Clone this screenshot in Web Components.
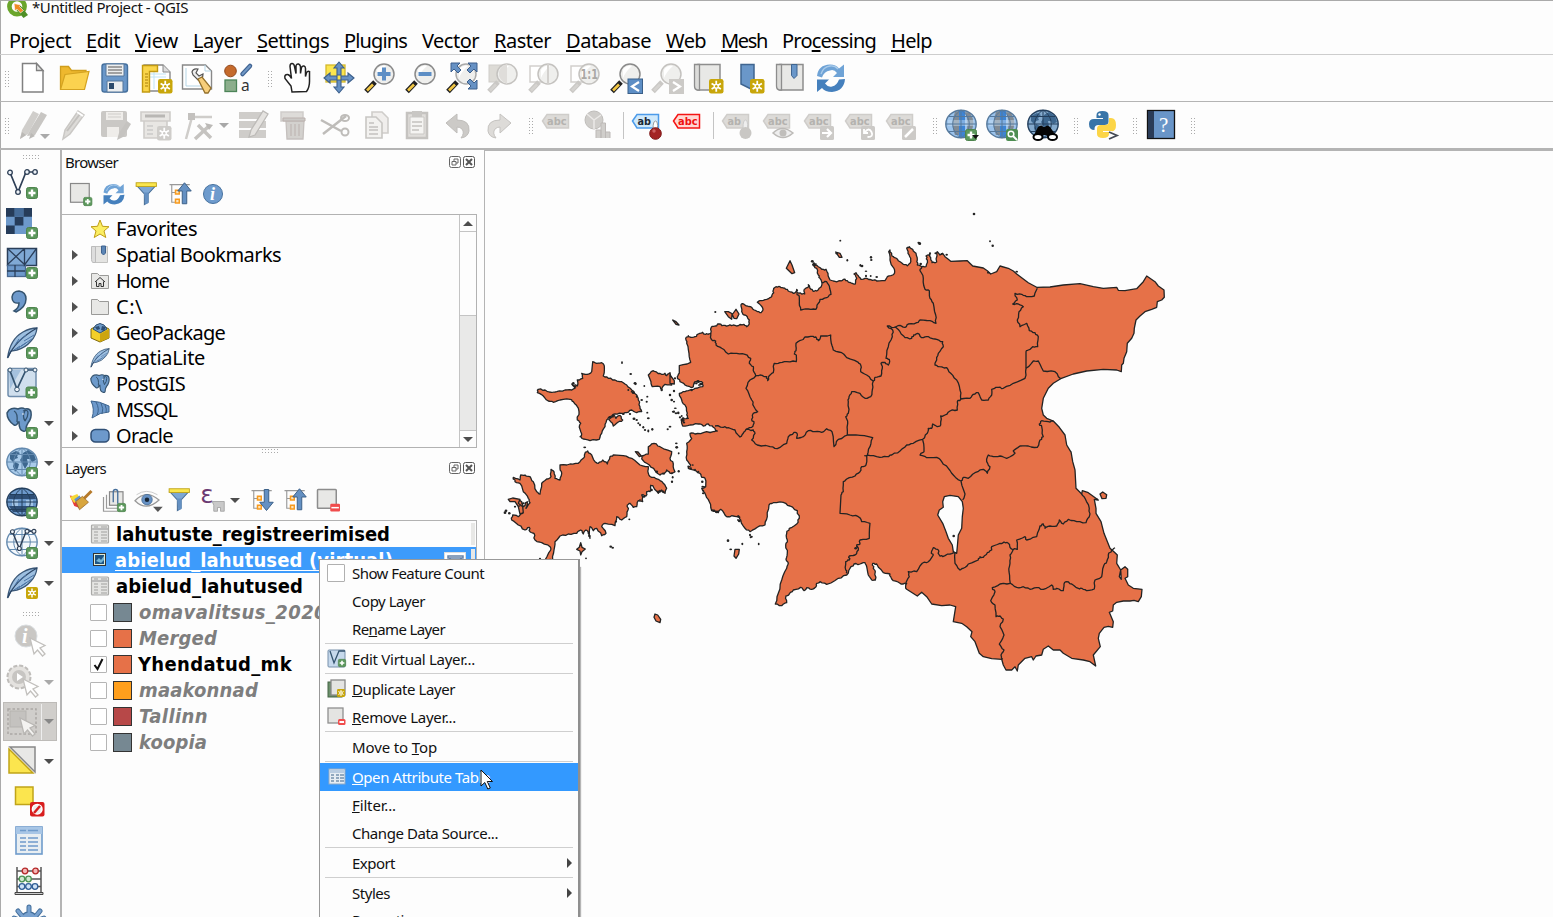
<!DOCTYPE html>
<html lang="en">
<head>
<meta charset="utf-8">
<title>Untitled Project - QGIS</title>
<style>html,body{margin:0;height:100%;overflow:hidden;background:#fdfdfd}</style>
</head>
<body>
<qgis-window></qgis-window>
<script>
/* ---------- icon artwork ---------- */
const plus=(x,y,s=12)=>`<g transform="translate(${x} ${y}) scale(${s/12})"><rect x=".5" y=".5" width="11" height="11" rx="2" fill="#5c985c" stroke="#4d844d"/><path d="M6 2.5v7M2.500 6h7" stroke="#fff" stroke-width="2.4"/></g>`;
const minus=(x,y,s=9)=>`<rect x="${x}" y="${y}" width="${s}" height="${s*.8}" rx="1.5" fill="#f04c4c"/><path d="M${x+1.5} ${y+s*.4}h${s-3}" stroke="#fff" stroke-width="2"/>`;
const fresh=(x,y,s=14,c='#c8a60a')=>`<g transform="translate(${x} ${y}) scale(${s/14})"><rect width="14" height="14" rx="2.2" fill="${c}"/><circle cx="7" cy="7" r="2.5" fill="#fff"/><path d="M7 1.8v10.4M2.5 4.4l9 5.2M11.5 4.4l-9 5.2" stroke="#fff" stroke-width="1.7"/><circle cx="7" cy="7" r="1.2" fill="${c}"/></g>`;
const lens=(hc='#f2c744',oc='#8a8a8a',extra='',dark='#222')=>`<path d="M11 20L2 29.500" stroke="${dark}" stroke-width="5"/><path d="M9 22.500L3 28.500" stroke="${hc}" stroke-width="2.600"/><circle cx="20" cy="12" r="10" fill="#efefed" stroke="${oc}" stroke-width="1.500"/><path d="M13 8q3-5 9-4q-6 5-9 12z" fill="#fff"/>${extra}`;
const glens=(back,extra='')=>back+lens('#d5d3d0','#c4c2bf',extra,'#cac8c5');
const label=(f,s,t,x='',word='abc')=>`<path d="M2.500 12L7 5.500h21.500V19H7z" fill="${f}" stroke="${s}" stroke-width="1.500"/><text x="${word==='ab'?7.500:7}" y="16.300" font-family="DejaVu Sans" font-weight="bold" font-size="10.500" textLength="${word==='ab'?13.500:19.500}" lengthAdjust="spacingAndGlyphs" fill="${t}">${word}</text>${x}`;
const glabel=(x,w)=>label('#dddbd8','#cfcdca','#b4b2af',x,w);
const globe=(a,b,l,x='')=>`<ellipse cx="16" cy="15" rx="15.200" ry="13.800" fill="${a}" stroke="${l}" stroke-width="1.400"/>${b}<path d="M1 15h30M4 7.500h24M4 22.500h24M16 1v28M16 1C5 8 5 22 16 29M16 1c11 7 11 21 0 28" fill="none" stroke="${l}" stroke-width="1"/>${x}`;
const land='<path d="M4 7l6-3 4 2-3 3 1 2-3 1-2 3-3-3zM9 15l4 2-1 4-3 4-2-6zM17 6l5-3 6 4 2 6-4 2-2-3-3 0 1 5-3 5-3-6-2-3 2-3z" fill="#3d678f"/>';
const feather='<path d="M1.500 31C3 20 8 10 17 5q7-4 14-4q-1 8-6 13-6 7-14 9l-6 1z" fill="#9dbfe0" stroke="#3b5878" stroke-width="1.300"/><path d="M2 30.500C7 18 17 9 31 1" fill="none" stroke="#2c4666" stroke-width="1.300"/><path d="M8 23l6-4M11 22l9-6M15 19l11-7M12 15l8-7M18 14l10-6M9 18l4-6" stroke="#4a74a5" stroke-width="1"/>';
const vee=(c='#2e3f56',f='#eef3f8')=>`<path d="M4 5.500L12 25 20 5h9" fill="none" stroke="${c}" stroke-width="1.700"/><g fill="${f}" stroke="${c}" stroke-width="1.300"><circle cx="4" cy="5.500" r="2.300"/><circle cx="12" cy="25" r="2.300"/><circle cx="21" cy="5" r="2.300"/><circle cx="29" cy="5" r="2.300"/></g>`;
const elephant='<path d="M3 3Q7 0 12 2q4-2 7 0 5-1 6 3 1 6-3 11-2 3-2 6 0 3-3 2-4-1-4-9l-1 0q-1 4-4 3Q1 13 1 6z" fill="#6d9acb" stroke="#34536f" stroke-width="1.500"/><path d="M8 4q4 2 3 11M19 4q-3 5 0 10M17 4q5-2 5 2t-3 8" fill="none" stroke="#34536f" stroke-width="1.300"/><circle cx="17" cy="7" r=".8" fill="#fff"/>';
const sync='<path d="M2 14Q3 3 15 2.500q6 0 9 4l5-4V15H18l4-4Q19 7 15 8.500q-6 1-8 7z" fill="#6fa3d6"/><path d="M30 17Q29 29 17 30q-7 0-10-4l-5 4V17.500h12l-4 4q3 4 7 3 5-1 7-7z" fill="#4580bd"/><path d="M6 12Q8 5 15 4q5-.5 8 3" fill="none" stroke="#a9cbea" stroke-width="1.300"/>';
const funnel='<path d="M2.500 5h25l-10 11v11l-5 3V16z" fill="#7da7d4" stroke="#4b7097" stroke-width="1.400"/><path d="M12 14h6v14l-4 2z" fill="#6490c2"/><rect x="1.500" y="1" width="27" height="5" fill="#fae64d" stroke="#c0a419" stroke-width="1.200"/>';
const cur=(x,y,f='#fff',s='#c2c0bd')=>`<path d="M${x} ${y}l4 16 3.500-4 5 6 2.500-2-5-6 5-2.500z" fill="${f}" stroke="${s}" stroke-width="1.300"/>`;
const tree='<path d="M2 3.500h27M5 3v24h6M5 14h5" fill="none" stroke="#999" stroke-width="1.500"/><rect x="9" y="10" width="7" height="7" fill="#f79a1e"/><rect x="9" y="22" width="7" height="7" fill="#f79a1e"/><rect x="11" y="12" width="3" height="3" fill="#fbe5c0"/><rect x="11" y="24" width="3" height="3" fill="#fbe5c0"/>';
const sq='<rect x="2" y="2" width="25" height="25" rx="1" fill="#e8e8e6" stroke="#8d8d8d" stroke-width="2"/>';
const table=(a,b,h)=>`<rect x="3" y="2" width="26" height="27" fill="${a}" stroke="${b}" stroke-width="1.600"/><rect x="3" y="2" width="26" height="7" fill="${h}"/><path d="M7 5.500h6M15 5.500h10M7 13h6M15 13h10M7 17h6M15 17h10M7 21h6M15 21h10M7 25h6M15 25h10" stroke="${b}" stroke-width="1.600"/>`;
const G='#cfcdca';
const I={
logo:'<circle cx="12" cy="5.500" r="7.600" fill="none" stroke="#6aa52b" stroke-width="4.600"/><path d="M11 4l4 0 8 10-4.500 3-8-9z" fill="#4f8f26"/><path d="M9 2.500l7 1.500-1.500 1.500 4 4-3 2.500-3.500-4-2 2z" fill="#f08a24" stroke="#fff" stroke-width=".6"/>',
newp:'<path d="M5.500 1.500h14l6.500 7v21.500H5.500z" fill="#fff" stroke="#808080" stroke-width="1.500"/><path d="M19.500 1.500v7h6.500z" fill="#e5e5e3" stroke="#808080" stroke-width="1.300"/>',
open:'<path d="M2.500 27V4.500h8l3 4H28V13" fill="#eeb82e" stroke="#d09e1c" stroke-width="1.300"/><path d="M2.500 27.500L7 12.500l24-3-4.500 18z" fill="#fbd24f" stroke="#d4a321" stroke-width="1.200"/>',
save:'<rect x="3" y="2" width="25.500" height="28" rx="2.500" fill="#6a97c9" stroke="#45709d" stroke-width="1.400"/><path d="M7 2h18v12H7zM8 19h16v11H8z" fill="#eceeef" stroke="#54779b"/><path d="M9 5h14M9 8h14M9 11h14" stroke="#888" stroke-width="1.300"/><rect x="10" y="21" width="5" height="6" fill="#2c4a6b"/>',
layout:'<path d="M4 3h19l7 7v19H4z" fill="#fff" stroke="#888" stroke-width="1.400"/><path d="M23 3v7h7" fill="#ddd" stroke="#888"/><path d="M10 12h16M10 15h16M14 9v18" stroke="#bfe4f5"/><path d="M2.500 3.500h15v6h-8V30h-7z" fill="#fad54a" stroke="#c29a12" stroke-width="1.400"/><path d="M5 12h3M5 15h3M5 18h3M5 21h3M5 24h3" stroke="#a97f0a"/>'+fresh(18,17,14.5),
manager:'<path d="M1.500 3h23l6 6v18h-29z" fill="#fff" stroke="#888" stroke-width="1.400"/><path d="M24 3v6h6M5 6v18h20" fill="none" stroke="#b5d5e5"/><path d="M11 10q1-4 6-3l-2 4 3 3 4-2q0 6-5 6L12 13z" fill="#eee" stroke="#555" stroke-width="1.200"/><path d="M17 17l4-2 9 11-3 5-3 0z" fill="#f7ce7b" stroke="#94712d" stroke-width="1.300"/>',
style:'<circle cx="8.500" cy="9" r="5.800" fill="#c56a2c" stroke="#91461a"/><path d="M20.500 12l7.500-8" stroke="#3f6392" stroke-width="4.500" stroke-linecap="round"/><path d="M20.500 12l7.500-8" stroke="#7198c5" stroke-width="2" stroke-linecap="round"/><rect x="3" y="18" width="11.500" height="11.500" fill="#8cae8c" stroke="#4c8458" stroke-width="1.300"/><text x="19" y="29" font-family="Noto Sans" font-size="15.500" fill="#333">a</text>',
pan:'<path d="M10 30l-1-6-6-7.500q-1-4 2.500-4 2 0 4 4l-1.500-12q0-3 2-3t2.500 3l1.500 7 0-8q1-2 2.500-1.500t2 2.500l0 7 1-6q1-2 2.500-1.500t1.500 2.500l0 8 1-4q1.500-2 3-1l0 10q0 6-3 10z" fill="#fff" stroke="#222" stroke-width="1.500"/>',
pansel:'<rect x="3" y="3" width="19" height="17" fill="#fbe54e" stroke="#d5b92c" stroke-width="1.300"/><path d="M16 0l5 6h-3v7h-4V6h-3zM16 31l-5-6h3v-7h4v7h3zM1 16l6-5v3h7v4H7v3zM31 16l-6-5v3h-7v4h7v3z" fill="#6691c4" stroke="#3c5f8c" stroke-width="1.100"/>',
zin:lens('#f2c744','#8a8a8a','<path d="M20 5.500v13M13.500 12h13" stroke="#5d8ec5" stroke-width="4"/>'),
zout:lens('#f2c744','#8a8a8a','<path d="M13.500 12h13" stroke="#5d8ec5" stroke-width="4"/>'),
zfull:lens('#f2c744','#aaa','<path d="M5 1h9l-3 3 4 4-3 3-4-4-3 3zM31 1v9l-3-3-4 4-3-3 4-4-3-3zM31 27h-9l3-3-4-4 3-3 4 4 3-3z" fill="#6691c4" stroke="#3c5f8c"/>'),
zsel:glens('<rect x="2" y="3" width="18" height="17" fill="#dddbd6" stroke="#cfcdc9"/>','<path d="M20 2v20q-9-4-8-12 1-6 8-8z" fill="#dfddda"/>'),
zlay:glens('<path d="M2 4h18v16H2z" fill="#fff" stroke="#d2d0cd" stroke-width="1.500"/>','<path d="M20 2v20" stroke="#d2d0cd" stroke-width="2"/>'),
znat:glens('<path d="M2 4h18v16H2z" fill="#fff" stroke="#d2d0cd" stroke-width="1.500"/>','<text x="11.500" y="17" font-family="DejaVu Sans" font-weight="bold" font-size="13.500" textLength="17.500" lengthAdjust="spacingAndGlyphs" fill="#aaa8a5">1:1</text>'),
zlast:lens('#f2c744','#8a8a8a','<rect x="18" y="17" width="14.500" height="14.500" fill="#5d8ec5" stroke="#3b6089"/><path d="M29 20l-7 4.500 7 4.500" fill="none" stroke="#fff" stroke-width="2.200"/>'),
znext:glens('','<rect x="18" y="17" width="15" height="15" fill="#cccac7"/><path d="M22 20l7 4.500-7 4.500" fill="none" stroke="#fff" stroke-width="2.200"/>'),
newmap:'<path d="M6 2.500h22V28H6z" fill="#e8e8e6" stroke="#8d8d8d" stroke-width="1.500"/><path d="M2.500 2.500h5V28H5q-2.500-.5-2.500-4z" fill="#dcdcda" stroke="#8d8d8d" stroke-width="1.300"/>'+fresh(17,17,14.5),
newbm:'<path d="M8 2.500h13v26L8 22z" fill="#6a97c9" stroke="#3f6590" stroke-width="1.500"/>'+fresh(17,17,14.5),
bms:'<path d="M6 2.500h23V28H6z" fill="#e8e8e6" stroke="#8d8d8d" stroke-width="1.500"/><path d="M2.500 2.500h5V28H5q-2.500-.5-2.500-4z" fill="#dcdcda" stroke="#8d8d8d" stroke-width="1.300"/><path d="M17.500 2.500h5.500v11l-3 3-2.500-3z" fill="#6a97c9" stroke="#3f6590"/>',
sync,
edits:'<path d="M3 30l2-9L16 2l6 3L11 25z" fill="#d0cecb"/><path d="M10 27l3-6L24 3l6 3-12 20z" fill="#c8c6c3"/><path d="M3 30l2-7 4 3zM12 30l2-6 4 3z" fill="#bbb9b6"/>',
edit:'<path d="M5 30l2-9L20 2l6 4L12 25z" fill="#dddbd8" stroke="#cac8c5" stroke-width="1.500"/><path d="M9 22L22 5" stroke="#c3c1be" stroke-width="2"/><path d="M19 3l6 4" stroke="#fff" stroke-width="2"/>',
gsave:`<rect x="2" y="2" width="26" height="26" rx="2" fill="#cac8c5"/><path d="M7 3h17v8H7zM8 18h12v10H8z" fill="#efedea"/><path d="M9 5h13M9 8h13" stroke="${G}"/><path d="M18 31l2-7 8-12 4 3-8 13z" fill="#c5c3c0"/>`,
gadd:`<path d="M1 3h29v9H1zM4 12h23v17H4z" fill="#e8e6e3" stroke="${G}" stroke-width="1.600"/><path d="M5 7h20" stroke="#b9b7b4" stroke-width="3"/><path d="M7 17h6M7 21h6M7 25h6" stroke="#bbb"/>`+fresh(17,17,14.5,'#cfcdca'),
gvert:`<path d="M3 30L9 8h20" fill="none" stroke="${G}" stroke-width="2.500"/><rect x="5" y="4" width="7" height="7" fill="#c3c1be"/><path d="M12 30l14-13M15 16l13 13" stroke="#c5c3c0" stroke-width="3.500"/><path d="M22 14l8 2-4 5z" fill="#bbb9b6"/>`,
gmulti:`<path d="M2 3h27v7H2zM2 12h27v7H2zM2 21h27v8H2z" fill="${G}"/><path d="M12 28l2-7L26 2l5 3-13 21z" fill="#e5e3e0" stroke="#bdbbb8" stroke-width="1.300"/>`,
gdel:`<path d="M3 3h22v9H3z" fill="#dddbd8" stroke="${G}" stroke-width="1.500"/><path d="M8 12h18l-1 18H9z" fill="#d3d1ce" stroke="#c5c0be" stroke-width="1.300"/><path d="M5 9h22v3H5zM13 15v12M17 15v12M21 15v12" stroke="#bbb1ae" fill="#cbc9c6"/>`,
gcut:`<path d="M2 11l20 11M4 25l23-18" stroke="#bebcb9" stroke-width="2.500"/><g fill="none" stroke="#bebcb9" stroke-width="2"><ellipse cx="26" cy="9" rx="4" ry="3"/><ellipse cx="26" cy="23" rx="3.500" ry="3.500"/></g>`,
gcopy:`<path d="M12 3h10l6 6v15H12z" fill="#f0eeec" stroke="${G}" stroke-width="1.600"/><path d="M6 8h10l6 6v15H6z" fill="#f3f2f0" stroke="#c8c6c3" stroke-width="1.600"/><path d="M9 14h5M9 18h9M9 21h9M9 25h9" stroke="#c3c1be" stroke-width="1.500"/>`,
gpaste:'<path d="M6 4h20v25H6z" fill="#e0dedb" stroke="#c5c3c0" stroke-width="2.500"/><path d="M9 8h14v17H9z" fill="#f5f4f2" stroke="#cac8c5"/><path d="M11 2h10v6H11z" fill="#c9c7c4"/><path d="M11 13h10M11 17h10M11 21h7" stroke="#c3c1be" stroke-width="1.500"/>',
gundo:'<path d="M4 14L15 5v6q13 0 12 11-1 6-8 7 4-5 1-9-2-2-5-2v6z" fill="#cccac7" stroke="#c0bebb"/>',
gredo:'<path d="M28 14L17 5v6Q4 11 5 22q1 6 8 7-4-5-1-9 2-2 5-2v6z" fill="#dddbd8" stroke="#c5c3c0"/>',
glab:glabel(''),
gdia:`<circle cx="13" cy="11" r="9" fill="#cfcdca" stroke="#bfbdba"/><path d="M13 11l-7-6M13 11l7-5M13 11v9" stroke="#ebe9e7" stroke-width="1.500"/><path d="M15 29v-8h5v8M20 29V14h4.500v15M24.500 29v-6H29v6" fill="#d0cecb" stroke="#bdb9b7"/>`,
labpin:label('#cfe9fb','#4c9bea','#1b2836','<path d="M23 20q0-8 2.500-8t2 8" fill="#fff" stroke="#999"/><circle cx="25.500" cy="24.500" r="5.800" fill="#a32323" stroke="#7c1515"/><circle cx="24" cy="22" r="1.700" fill="#cc6060"/>','ab'),
labred:label('#ffd8d4','#f51414','#ef1010'),
glpin:glabel('<path d="M23 19q0-8 2.500-8t2 8" fill="#eee" stroke="#ccc"/><circle cx="25.500" cy="24" r="6" fill="#c9c7c4"/>','ab'),
gleye:glabel('<path d="M12 24q9-9 20 0-10 9-20 0z" fill="#eee" stroke="#bdbbb8" stroke-width="1.500"/><circle cx="22" cy="24" r="3.500" fill="#c0bebb"/>'),
glmove:glabel('<rect x="18" y="17" width="14" height="14" rx="1.500" fill="#cccac7"/><path d="M20 24h8m-3-4l4 4-4 4" stroke="#fff" stroke-width="2.200" fill="none"/>'),
glrot:glabel('<rect x="18" y="17" width="14" height="14" rx="1.500" fill="#cccac7"/><path d="M22 23q4-5 6.500 0t-4 5M21 20v4h4" stroke="#fff" stroke-width="1.800" fill="none"/>'),
gledit:glabel('<rect x="18" y="17" width="14" height="14" rx="1.500" fill="#cccac7"/><path d="M21 28l8-8" stroke="#fff" stroke-width="2.500"/>'),
globeadd:globe('#9bc3ec','<path d="M10 3q-5 12 0 23l4 0V2zM20 3q5 12 0 23l5-2q7-10 0-20z" fill="#777" opacity=".75"/><rect x="14" y="2" width="6" height="26" fill="#3d84d4"/><path d="M3 11h26v6H3z" fill="#cfe3f6" opacity=".45"/>','#55789b',plus(20,20)+'<path d="M27 26h7l-3.500 4z" fill="#111"/>'),
globefind:globe('#9bc3ec','<path d="M10 3q-5 12 0 23l4 0V2zM20 3q5 12 0 23l5-2q7-10 0-20z" fill="#777" opacity=".75"/><rect x="14" y="2" width="6" height="26" fill="#3d84d4"/><path d="M3 11h26v6H3z" fill="#cfe3f6" opacity=".45"/>','#55789b','<rect x="20" y="20" width="12" height="12" rx="2" fill="#4e8e52"/><circle cx="25" cy="25" r="2.800" fill="none" stroke="#fff" stroke-width="1.500"/><path d="M27 27l4 4" stroke="#fff" stroke-width="2"/>'),
metas:globe('#84aacd',land,'#233f5d','<path d="M6 28l5-10q4-3 5 0h2q2-3 5 0l7 10-6 3-5-5h-4l-4 5z" fill="#050505"/><ellipse cx="11" cy="28" rx="4.500" ry="3" fill="#fff" stroke="#000" stroke-width="2"/><ellipse cx="25.500" cy="28" rx="4.500" ry="3" fill="#fff" stroke="#000" stroke-width="2"/>'),
python:'<path d="M9.500 10V6q0-4 6-4t6 4v7q0 3-4 3h-6q-4 0-4 4v1Q2 21 2 15q0-5 5-5h9V9H9.500z" fill="#3774a8"/><circle cx="12.500" cy="5.500" r="1.200" fill="#fff"/><path d="M22 9h2q5 0 5 7t-5 6h-8v1h6v2q0 4-6 4t-6-4v-5q0-4 4-4h4q4 0 4-4z" fill="#fcd547"/><path d="M22 23l8 3.500-8 3.500" fill="none" stroke="#444a55" stroke-width="1.800"/>',
help:'<rect x="2.500" y="1.500" width="27" height="28" fill="#6995c8" stroke="#111" stroke-width="1.300"/><rect x="3" y="2" width="6" height="27" fill="#2a3b57"/><text x="14" y="23" font-family="Liberation Serif" font-size="21" fill="#fff">?</text>',
vec:vee()+plus(20,20),
raster:'<path d="M0 1h26v26H0z" fill="#6d99cb"/><path d="M0 1h8.700v8.700H0zM17.400 1H26v8.700h-8.600zM8.700 9.700h8.700v8.700H8.700zM0 18.400h8.700V27H0z" fill="#263c5a"/><path d="M8.700 1h8.700v8.700H8.700z" fill="#456b98"/>'+plus(20,20),
mesh:'<rect x="1.500" y="1.500" width="29" height="17" fill="#80a9d5" stroke="#2b3f5a" stroke-width="1.500"/><rect x="1.500" y="18.500" width="18" height="11" fill="#6d99cb" stroke="#496991" stroke-width="1.300"/><path d="M1.500 1.500l17 16M18.500 1.500l-17 16M18.500 1v17L30.500 1.500M1 24h18M9 18v12" fill="none" stroke="#2b3f5a" stroke-width="1.300"/>'+plus(20,20),
csv:'<path d="M8 24q5-3 5-8-7 1-7-6 1-6 7-6 7 1 7 8 0 8-10 13z" fill="#6d99cb" stroke="#34536f" stroke-width="1.500"/>'+plus(20,20),
lite:feather+plus(20,20),
virt:'<rect x="2" y="1.500" width="28" height="28" rx="2" fill="#d0dfed" stroke="#6f8dac" stroke-width="1.500"/><path d="M3 3h12L4 22z" fill="#a4c1de"/><path d="M4 4l7 18 9-19h9" fill="none" stroke="#34536f" stroke-width="1.700"/><g fill="#eef3f8" stroke="#34536f"><circle cx="4" cy="3" r="2"/><circle cx="11" cy="22.500" r="2.300"/><circle cx="20" cy="3" r="2"/><circle cx="29" cy="3" r="2"/></g>'+plus(19.5,19.5),
pg:elephant+plus(20,20),
wms:globe('#a9cbea',land,'#6389ae',plus(20,20)),
wcs:globe('#6d99cb','<path d="M4 7h24l2 5H2zM3 19h26l-4 6H7z" fill="#2e4e75"/><path d="M6 13h6v6H6zM20 13h7v6h-7z" fill="#a2c4e6"/>','#233f5d',plus(20,20)),
wfs:globe('#f4f8fc','','#6389ae',vee().replace('<path','<path transform="translate(3 0) scale(.86)"').replace('<g','<g transform="translate(3 0) scale(.86)"')+plus(20,20)),
litenew:feather+fresh(20,20,12),
ginfo:'<g transform="translate(0 -3)"><circle cx="13" cy="13" r="11" fill="#c9c7c4" stroke="#d9dde0"/><text x="9" y="20" font-family="Liberation Serif" font-style="italic" font-weight="bold" font-size="20" fill="#fff">i</text>'+cur(17,15)+'</g>',
gact:`<g transform="translate(-1 -3)"><circle cx="14" cy="14" r="11.500" fill="#e4e2df" stroke="#bfbdba" stroke-width="2" stroke-dasharray="4 2"/><circle cx="14" cy="14" r="7" fill="#c7c5c2"/><path d="M12 10l6 4-6 4z" fill="#fff"/>`+cur(18,16)+'</g>',
gsel:'<rect x="3" y="3" width="28" height="25" fill="none" stroke="#aaa8a5" stroke-dasharray="2.500 2" stroke-width="1.500"/><rect x="5" y="5" width="16" height="16" fill="#c4c2bf" stroke="#b5b3b0"/>'+cur(15,12,'#f4f3f1','#b9b7b4'),
selval:'<path d="M4 2L29 27V2z" fill="#e8e8e6" stroke="#888" stroke-width="1.500"/><path d="M3 4v24h24z" fill="#fbe54e" stroke="#c0a419" stroke-width="1.500"/>',
desel:'<rect x="2.500" y="2" width="17.500" height="17.500" fill="#fbe54e" stroke="#c0a419" stroke-width="1.500"/><rect x="17" y="17" width="14.500" height="14.500" rx="2" fill="#d81e1e"/><circle cx="24.200" cy="24.200" r="4.800" fill="#eee" stroke="#fff" stroke-width="1.500"/><path d="M21 28l6-7" stroke="#d81e1e" stroke-width="2.500"/>',
attr:table('#e8eef2','#6f9bcb','#a8c6e6'),
abac:'<path d="M4 2v25M28 2v25M4 6h24M4 14h24M4 21.500h24" stroke="#555" stroke-width="1.500"/><path d="M2 27.500h28v2H2z" fill="#ccc" stroke="#444"/><g stroke-width="1.300"><g fill="#f5b8b8" stroke="#b52a2a"><circle cx="12" cy="6" r="2.800"/><circle cx="22.500" cy="6" r="2.800"/></g><g fill="#cfe8cf" stroke="#4c9152"><circle cx="9" cy="14" r="2.800"/><circle cx="15.500" cy="14" r="2.800"/></g><g fill="#cfe3f7" stroke="#2f5f97"><circle cx="9" cy="21.500" r="2.800"/><circle cx="15.500" cy="21.500" r="2.800"/><circle cx="22" cy="21.500" r="2.800"/></g></g>',
gear:'<path d="M16 9V2M9 11L5 6M23 11l4-5M6 15l-5-2M26 15l5-2" stroke="#45709d" stroke-width="5" stroke-linecap="round"/><circle cx="16" cy="16" r="9" fill="#78a1cf" stroke="#45709d" stroke-width="1.500"/><path d="M16 10V2M10 12L5 6M22 12l5-6M7 15l-6-2M25 15l6-2" stroke="#78a1cf" stroke-width="3" stroke-linecap="round"/>',
addsel:'<rect x="2" y="2" width="25" height="25" fill="#e8e8e6" stroke="#888" stroke-width="1.600"/>'+plus(19,20,12),
funnel,
collapse:tree+'<path d="M22 29V12h-6L25 1l9 11h-6v17z" transform="translate(-3 0)" fill="#6490c2" stroke="#3b5f87" stroke-width="1.300"/>',
expand:tree+'<path d="M22 2v17h-6L25 30l9-11h-6V2z" transform="translate(-3 0)" fill="#6490c2" stroke="#3b5f87" stroke-width="1.300"/>',
info:'<circle cx="16" cy="16" r="12.700" fill="#6e9bcd" stroke="#45709d" stroke-width="1.300"/><text x="12" y="24" font-family="Liberation Serif" font-style="italic" font-weight="bold" font-size="24" fill="#fff">i</text>',
brush:'<path d="M1 10l12 2 2 15-8-3z" fill="#e63a3a"/><path d="M1 12l10-4 4 6-8 6z" fill="#f6d836"/><path d="M7 15l7-5 3 5-7 5z" fill="#5d92d2"/><path d="M9 18l9-7 8 8-12 10z" fill="#d8a53d" stroke="#94662a"/><path d="M20 14L30 4" stroke="#b67a2b" stroke-width="4"/>',
addgrp:'<path d="M2 12v19h19" fill="none" stroke="#999" stroke-width="1.600"/><path d="M6 9v18h18" fill="none" stroke="#999" stroke-width="1.600"/><rect x="10" y="5" width="18" height="18" fill="#e8e8e6" stroke="#888" stroke-width="1.600"/><path d="M15 19V5q0-3 3-3t3 3v16" fill="none" stroke="#466f9b" stroke-width="1.800"/>'+plus(20,20),
eye:'<path d="M0 17Q15 1 32 16 15 32 0 17z" fill="#f8f8f8" stroke="#999" stroke-width="1.700"/><circle cx="16" cy="15.500" r="7" fill="#6691c4" stroke="#426893"/><circle cx="16" cy="15.500" r="3" fill="#192737"/><path d="M24 25h13l-6.500 7z" fill="#555"/><path d="M2 9Q15 0 30 9" fill="none" stroke="#bbb"/>',
eps:'<text x="-1" y="20" font-family="DejaVu Sans" font-size="33" fill="#6b3a73">ε</text><path d="M15 18h16v13h-5v-5h-4v5h-5v-8z" fill="#c9c9c9" stroke="#999"/>',
rem:sq+minus(19,21,13),
star:'<path d="M10 1l2.500 6.300 6.500.4-5 4.300 1.800 6.500L10 15l-5.800 3.500L6 12 1 7.700l6.500-.4z" fill="#fbee62" stroke="#bf9d17"/>',
tbm:'<path d="M3 1.500h14.500v16H3z" fill="#e4e4e2" stroke="#c2c2c0"/><path d="M1.500 1.500h4v16H3q-1.500-.5-1.500-3z" fill="#ddd" stroke="#bbb"/><path d="M11.500 1h4v7l-2 2-2-2z" fill="#5d86b5" stroke="#3d6290"/>',
home:'<path d="M1.500 2.500h6l2 2h9v13h-17z" fill="#e8e8e6" stroke="#9a9a98"/><path d="M5 11l5-4.500 5 4.500M6.500 10.500v5h2.500v-3h2v3h2.500v-5" fill="none" stroke="#333"/>',
folder:'<path d="M1.500 2.500h6l2 2h9v13h-17z" fill="#e8e8e6" stroke="#9a9a98"/>',
gpkg:'<path d="M1 6l9-5 9 5v9l-9 4-9-4z" fill="#f2cf28" stroke="#80690e"/><path d="M10 11v8l9-4V6z" fill="#cda50e"/><path d="M3 6l3-4 4-1.500L14 2l3 4-7 4z" fill="#6f9bc8" stroke="#2d4e74"/><path d="M5 4l4-1 1 3-3 1zM12 3l4 1-2 4-3-1z" fill="#2d4e74"/>',
tfeather:`<g transform="scale(.62)">${feather}</g>`,
tpg:`<g transform="scale(.76)">${elephant}</g>`,
mssql:'<path d="M1 1q8 0 18 5l0 6q-9 0-17 6 3-9-1-17z" fill="#6d99cb" stroke="#3d648e"/><path d="M6 2q4 7 1 13M11 3q3 6 1 11M15 5q2 4 1 8" fill="none" stroke="#3d648e"/>',
oracle:'<rect x="1" y="3.500" width="18" height="12.500" rx="4.500" fill="#6d99cb" stroke="#2f4f76" stroke-width="1.500"/>',
ttable:'<rect x="1.500" y="1" width="17" height="18" rx="1" fill="#e4e4e2" stroke="#a9a9a7" stroke-width="1.200"/><path d="M2 5h16" stroke="#bbb" stroke-width="2"/><path d="M4 3h4M11 3h6M4 8h4M11 8h6M4 11h4M11 11h6M4 14h4M11 14h6M4 17h4M11 17h6" stroke="#a0a09e"/>',
tvirt:'<rect x="3.500" y="3.500" width="12" height="12" fill="#dcebdc" stroke="#333"/><rect x="5" y="5" width="9" height="9" fill="#1d5485"/><path d="M6 11l3-3 2 2 3-4v4l-3 3z" fill="#72b5d8"/>',
mvirt:'<rect x="1" y="1" width="17" height="17" rx="1" fill="#c6d9ec" stroke="#7690ab"/><path d="M3 2l4 12 5-12h6" fill="none" stroke="#34536f" stroke-width="1.300"/>'+plus(11,10,8),
mdup:'<rect x="1" y="3" width="14" height="15" fill="#6c906c" stroke="#456545"/><rect x="4" y="1" width="14" height="15" fill="#e4e4e2" stroke="#888" stroke-width="1.300"/>'+fresh(10,10,8),
mrem:'<rect x="1" y="1" width="15" height="15" fill="#e4e4e2" stroke="#909090" stroke-width="1.300"/>'+minus(11,12,7.5),
mtable:'<rect x="2" y="2" width="16" height="15" fill="#e6edf3" stroke="#8faac6"/><path d="M2 4.500h16" stroke="#b9cce0" stroke-width="3"/><path d="M4 8h3M9 8h3M13 8h4M4 11h3M9 11h3M13 11h4M4 14h3M9 14h3M13 14h4" stroke="#7691ad" stroke-width="1.500"/>'
};
const SMALL=new Set('star tbm home folder gpkg tfeather tpg mssql oracle ttable tvirt mvirt mdup mrem mtable'.split(' '));

const define=(name,css,html,after)=>customElements.define(name,class extends HTMLElement{
  connectedCallback(){
    if(this.shadowRoot)return;
    const t=document.createElement('template');
    t.innerHTML=`<style>${css}</style>${typeof html==='function'?html(this):html}`;
    this.attachShadow({mode:'open'}).append(document.importNode(t.content,true));
    if(after)after(this);
  }
});

/* Text run with a fixed advance width, spread evenly over its letters */
define('fit-text',':host{display:inline-block;white-space:nowrap}span{display:inline-block}:host([under]) span{text-decoration:underline;text-underline-offset:3px;text-decoration-thickness:1px;text-decoration-skip-ink:none}','<span><slot></slot></span>',el=>{
  const w=+el.getAttribute('w'),s=el.shadowRoot.querySelector('span');
  const now=s.getBoundingClientRect().width;
  if(w&&now)s.style.letterSpacing=(w-now)/el.textContent.length+'px';
});
define('q-icon',':host{display:block;flex:none;line-height:0}svg{display:block;overflow:visible}',el=>{
  const n=el.getAttribute('name'),v=SMALL.has(n)?20:32,s=el.getAttribute('size')||v;
  return `<svg width="${s}" height="${s}" viewBox="0 0 ${v} ${v}">${I[n]||''}</svg>`;
});
define('drop-arrow',':host{display:block;flex:none;width:0;height:0;border:5px solid transparent;border-top-color:var(--arrow,#4d4d4d);border-bottom:0}','');
define('tool-grip',':host{display:block;flex:none;width:5px;height:17px;background:radial-gradient(circle,#aaa 0 .6px,transparent .9px) 0 0/3px 3px}:host([across]){width:17px;height:5px}','');
define('tool-button',':host{display:flex;flex:none;width:41px;height:100%;align-items:center;justify-content:center}','<slot></slot>');
define('tool-gap',':host{display:flex;flex:none;width:18px;height:100%;align-items:center;box-sizing:border-box;padding-left:9px}','<tool-grip></tool-grip>');
define('tool-rule',':host{display:block;flex:none;width:1px;height:27px;margin:0 1px 0 6px;background:#c4c4c4}','');

const btn=n=>`<tool-button><q-icon name="${n}"></q-icon></tool-button>`;
const gap=(w,p)=>`<tool-gap style="width:${w}px;padding-left:${p}px"></tool-gap>`;
define('title-bar',`:host{display:flex;align-items:flex-start;height:26px;box-sizing:border-box;border-top:1px solid #aaa;padding-left:5px;font:15px/15px "Noto Sans",sans-serif;color:#111}
q-icon{width:24px}q-icon,svg{overflow:hidden}fit-text{margin:-1px 0 0 3px}`,
 '<q-icon name="logo" size="32"></q-icon><fit-text w="156">*Untitled Project - QGIS</fit-text>');
const menus=[['Pro<u>j</u>ect',62],['<u>E</u>dit',34],['<u>V</u>iew',43],['<u>L</u>ayer',49],['<u>S</u>ettings',72],['<u>P</u>lugins',63],['Vect<u>o</u>r',57],['<u>R</u>aster',57],['<u>D</u>atabase',85],['<u>W</u>eb',40],['<u>M</u>esh',46],['Pro<u>c</u>essing',94],['<u>H</u>elp',41]];
define('menu-bar',`:host{display:flex;gap:15px;padding:1px 0 0 9px;box-sizing:border-box;align-items:center;border-bottom:1px solid #cdcdcd;font:20px/24px "Noto Sans",sans-serif;color:#000}
u{text-underline-offset:2px;text-decoration-thickness:1.500px;text-decoration-skip-ink:none}`,menus.map(m=>`<fit-text w="${m[1]}">${m[0]}</fit-text>`).join(''));
define('tool-bar',':host{display:flex;align-items:center;box-sizing:border-box}.first{width:12px;display:flex;justify-content:center}','<div class="first"><tool-grip></tool-grip></div><slot></slot>');

define('side-bar',`:host{display:flex;flex-direction:column;box-sizing:border-box;border-right:2px solid #b4b4b4;overflow:hidden}
.g{display:flex;height:13px;justify-content:center;align-items:center;flex:none}
.c{display:flex;height:40px;flex:none;align-items:center}.c q-icon{margin-left:6px}.c drop-arrow{margin-left:6px}
.r q-icon{margin-left:13px}.on{margin:0 3px;background:#d0cecb;border:1px solid #bdbbb8;box-sizing:border-box;width:54px;height:39px}.on q-icon{margin-left:1px}.on i{width:1px;height:36px;background:#eee;margin-left:4px}
.on i+drop-arrow{margin-left:2px}.pale{--arrow:#aaa}`,
 '<div class="g"><tool-grip across></tool-grip></div>'+
 [['vec'],['raster'],['mesh'],['csv'],['lite'],['virt'],['pg',1],['wms',1],['wcs'],['wfs',1],['litenew',1]].map(([n,a])=>`<div class="c"><q-icon name="${n}"></q-icon>${a?'<drop-arrow></drop-arrow>':''}</div>`).join('')+
 '<div class="g" style="height:19px;padding-top:2px;box-sizing:border-box"><tool-grip across></tool-grip></div>'+
 '<div class="c r"><q-icon name="ginfo"></q-icon></div><div class="c pale"><q-icon name="gact"></q-icon><drop-arrow></drop-arrow></div><div class="c on" style="--arrow:#888"><q-icon name="gsel"></q-icon><i></i><drop-arrow></drop-arrow></div><div class="c"><q-icon name="selval"></q-icon><drop-arrow></drop-arrow></div><div class="c r"><q-icon name="desel"></q-icon></div><div class="c r"><q-icon name="attr"></q-icon></div><div class="c r"><q-icon name="abac"></q-icon></div><div class="c r"><q-icon name="gear"></q-icon></div>');

define('dock-title',`:host{display:flex;align-items:center;height:24px;flex:none;padding:0 9px 0 3px;font:15px/20px "Noto Sans",sans-serif;color:#111}
svg{margin-left:2px}fit-text{margin-right:auto}`,
 el=>`<fit-text w="${el.getAttribute('w')}">${el.getAttribute('label')}</fit-text><svg width="12" height="12" viewBox="0 0 12 12" fill="none" stroke="#666"><rect x=".5" y=".5" width="11" height="11" rx="2"/><path d="M3 5.500h4V9H3zM5 5V3h4v4H7"/></svg><svg width="12" height="12" viewBox="0 0 12 12" fill="none" stroke="#555"><rect x=".5" y=".5" width="11" height="11" rx="2"/><path d="M3 3l6 6M9 3l-6 6" stroke-width="2"/></svg>`);

const tree1=[['star','Favorites',81,0],['tbm','Spatial Bookmarks',165,1],['home','Home',53,1],['folder','C:\\',27,1],['gpkg','GeoPackage',109,1],['tfeather','SpatiaLite',89,1],['tpg','PostGIS',69,0],['mssql','MSSQL',61,1],['oracle','Oracle',57,1]];
define('browser-panel',`:host{display:flex;flex-direction:column;height:298px;flex:none}
.t{display:flex;height:40px;align-items:center;padding-left:7px;gap:9px;flex:none}
.t q-icon{width:24px}
.box{display:flex;height:234px;border:1px solid #b2b2b2;border-left:0;box-sizing:border-box;margin-right:7px}
.rows{flex:1;padding-top:1px;overflow:hidden;font:20px/26px "Noto Sans",sans-serif;color:#000}
.row{display:flex;height:25.900px;align-items:center}.row i{width:0;height:0;border:5px solid transparent;border-left:6px solid #505050;border-right:0;margin:0 12px 0 10px}.row i.n{visibility:hidden}
.row fit-text{margin-left:6px}
.bar{width:16px;border-left:1px solid #c4c4c4;display:flex;flex-direction:column}
.bar div{height:16px;display:flex;align-items:center;justify-content:center}.up{border-bottom:1px solid #c4c4c4}.dn{border-top:1px solid #c4c4c4}
.thumb{height:83px!important;border-bottom:1px solid #c4c4c4}.page{flex:1;background:#e9e9e8}.up drop-arrow{transform:rotate(180deg)}`,
 '<dock-title label="Browser" w="53"></dock-title><div class="t">'+['addsel','sync','funnel','collapse','info'].map(n=>`<q-icon name="${n}" size="24"></q-icon>`).join('')+'</div><div class="box"><div class="rows">'+
 tree1.map(r=>`<div class="row"><i class="${r[3]?'':'n'}"></i><q-icon name="${r[0]}"></q-icon><fit-text w="${r[2]}">${r[1]}</fit-text></div>`).join('')+
 '</div><div class="bar"><div class="up"><drop-arrow></drop-arrow></div><div class="thumb"></div><div class="page"></div><div class="dn"><drop-arrow></drop-arrow></div></div></div>');

const layers=[['#768892','omavalitsus_2020',188],['#e67148','Merged',78],['#e67148','Yhendatud_mk',154,1],['#ff9f1c','maakonnad',119],['#b74848','Tallinn',69],['#768892','koopia',68]];
define('layers-panel',`:host{display:flex;flex-direction:column;flex:1;min-height:0}
.split{display:flex;height:8px;align-items:flex-start;justify-content:center;padding-right:8px}
.t{display:flex;height:40px;align-items:center;padding-left:7px;gap:9px;flex:none}.t drop-arrow{margin:0 1px 0 -4px}
.box{flex:1;border:1px solid #b2b2b2;border-width:1px 1px 0 0;margin-right:7px;overflow:hidden;font:bold 20px/26px "DejaVu Sans Condensed","Noto Sans",sans-serif;color:#000}
.row{display:flex;height:26px;align-items:center;padding-left:28px}.row fit-text{margin-left:6px}
.sel{background:#3d9bfb;color:#fff}
.sel fit-text{margin-left:5px}.sel b{margin:5px 0 0 auto;width:22px;height:22px;background:#fff;border:1px solid #ddd;display:flex;justify-content:center;padding-top:2px;margin-right:2px;box-sizing:border-box}
.thin{width:4px;height:22px;background:#e8e8e6;margin-left:auto;margin-right:1px}.sel .thin{margin-left:3px}
.cb{width:15px;height:15px;border:1px solid #b5b5b5;border-radius:1px;background:#fff;flex:none;margin-right:6px}
.sw{width:17px;height:17px;border:1px solid #333;flex:none}.off{color:#7e7e7e;font-style:italic}.row.off fit-text{margin-left:7px}svg{display:block}`,
 '<div class="split"><tool-grip across></tool-grip></div><dock-title label="Layers" w="41"></dock-title><div class="t"><q-icon name="brush" size="24"></q-icon><q-icon name="addgrp" size="24"></q-icon><q-icon name="eye" size="24"></q-icon><q-icon name="funnel" size="24"></q-icon><q-icon name="eps" size="24"></q-icon><drop-arrow></drop-arrow><q-icon name="expand" size="24"></q-icon><q-icon name="collapse" size="24"></q-icon><q-icon name="rem" size="24"></q-icon></div><div class="box"><div class="row"><q-icon name="ttable"></q-icon><fit-text w="274">lahutuste_registreerimised</fit-text><span class="thin"></span></div><div class="row sel"><q-icon name="tvirt"></q-icon><fit-text under w="278">abielud_lahutused (virtual)</fit-text><b><svg width="17" height="10" fill="none" stroke="#6582a8" stroke-width="1.500"><path d="M1 1h15v2H1zM2 3l6 6 7-6"/></svg></b><span class="thin"></span></div><div class="row"><q-icon name="ttable"></q-icon><fit-text w="187">abielud_lahutused</fit-text></div>'+
 layers.map(l=>`<div class="row ${l[3]?'':'off'}"><span class="cb">${l[3]?'<svg width="15" height="15" fill="none" stroke="#111" stroke-width="2"><path d="M3.500 8l3 4 5-10"/></svg>':''}</span><span class="sw" style="background:${l[0]}"></span><fit-text w="${l[2]}">${l[1]}</fit-text></div>`).join('')+'</div>');

/* ---------- county map: vertices are stored per survey tile, three units to a pixel ---------- */
const T={A:[5,189],B:[185,49],C:[415,49],D:[185,269],E:[415,269]};
const noise=i=>((Math.sin(i*91.7)*1e4)%1+1)%1;
/* rough: tiles in which long segments get a small offset at their midpoint */
const pts=(s,rough='')=>{let t,k,last,n=0;const out=[];for(const w of s.trim().split(/\s+/)){if(T[w]){t=T[w];k=w;continue}const[a,b]=w.split(',');const x=t[0]+a/3,y=t[1]+b/3;
  if(last&&rough.includes(k)){const dx=x-last[0],dy=y-last[1],d=Math.hypot(dx,dy);if(d>2.5&&d<16)for(const f of [.33,.67]){const o=(noise(++n+x)-.5)*1.5;out.push((last[0]+dx*f-dy/d*o).toFixed(1)+','+(last[1]+dy*f+dx/d*o).toFixed(1))}}
  out.push(x.toFixed(1)+','+y.toFixed(1));last=[x,y]}return out.join(' ')};
const coast=`B 28,497 62,487 57,460 50,430 47,415 55,407 62,412 75,410 85,402 98,397 107,403 115,403 122,400 124,382 135,378 148,372 160,376 175,377 190,375 205,377 222,373 230,380 238,372 238,360 232,350 222,345 215,335 213,318 218,311 232,318 245,322 258,332 270,338 278,332 276,320 262,307 275,302 290,298 305,290 311,278 311,265 318,260 330,260 340,264 352,268 362,276 374,279 380,268 382,278 395,282 404,282 403,268 412,263 415,254 423,268 430,274 440,273 452,262 456,250 450,235 445,225 440,205 428,194 432,188 440,196 455,208 468,208 474,220 480,240 495,244 510,242 520,238 532,242 545,250 556,252 560,235 552,222 558,218 568,232 575,238 590,235 600,238 612,240 620,243 645,242 652,230 668,225 674,215 668,200 660,180 656,155 660,150 665,165 672,172 685,182 700,193 712,197 720,190 722,175 714,160 710,145 718,140 728,148 738,160 742,180 742,195 755,200 768,200 772,180 768,168 780,163 782,178 786,188 800,186 800,158
C 112,155 120,165 128,160 135,170 145,178 152,184 180,183 202,182 218,198 250,204 262,212 272,222 290,215 300,198 325,205 340,213 350,222 385,248 410,262 450,261 490,255 540,251 580,260 610,265 650,262 655,271 675,272 710,266 730,245 740,228 765,245 775,258 792,270 793,292 785,300 772,305 770,322 755,328 735,335 720,348 708,360 703,385 702,400 695,415 682,430 680,455 672,475 670,490 665,495 664,515 650,510 610,508 560,513 520,522 482,536 460,550 445,565 430,595 425,625 430,645 440,655 460,663 478,682 495,705 500,735 512,755
E 513,95 518,125 525,150 528,205 545,222 547,212 565,218 595,240 583,238 588,265 588,280 603,305 612,340 630,385 645,398 652,405 650,430 662,450 658,470 664,478 662,450 675,440 683,448 683,470 675,475 685,495 700,505 726,508 724,530 715,545 702,541 690,543 670,543 650,547 640,555 638,573 628,577 640,605 638,622 625,619 612,622 598,640 595,655 601,680 580,705 587,738 570,725 550,720 515,715 490,700 480,690 460,690 445,678 430,688 425,705 408,708 400,720 395,710 375,715 355,735 352,753 345,740 335,750 318,750 310,735 305,718 275,716 250,710 238,700 225,665 212,650 216,635 200,620 185,610 160,605 167,560 150,555 125,557 95,552 80,530 65,517 52,528 20,508
D 707,505 710,490 700,492 690,490 670,482 662,470 660,462 640,458 620,432 608,430 610,445 616,455 616,480 605,480 595,465 590,440 585,428 570,432 552,432 540,445 530,465 505,475 470,493 450,485 440,490 438,500 425,508 410,503 402,512 392,502 370,510 358,522 348,528 350,548 335,557 316,552 325,520 335,480 350,445 355,430 348,418 352,400 347,375 352,360 350,340 358,325 380,312 388,295 382,272 360,258 340,247 310,248 297,255 292,290 285,315 262,322 240,335 225,325 212,300 205,288 190,288 175,290 165,285 152,268 145,278 125,272 118,245 107,225 95,205 107,200 105,175 95,172 90,160 72,150 55,145 62,135 50,120 50,95 50,70 65,55 60,40 75,42 100,38 130,35 142,33 130,22 115,12 100,18 85,12 60,15 38,18
B 35,660 55,655 50,645 52,640 45,615 35,600 28,580 45,575 60,570 75,565 98,560 98,548 85,542 75,545 70,560 62,562 45,555 30,545 22,530 28,520`;
const lake='E 133,230 150,226 175,230 187,245 190,265 187,290 185,325 175,345 172,380 170,400 160,395 157,375 145,355 138,335 128,310 113,285 118,270 130,262 128,245';
const isles=[
'A 308,65 320,70 335,68 343,78 340,108 355,115 375,120 395,125 410,135 425,150 440,165 445,180 450,200 455,215 440,218 425,210 410,218 395,220 375,222 360,230 350,240 345,260 335,280 328,298 300,302 280,297 270,290 275,282 268,262 272,250 262,240 267,215 262,200 250,185 240,178 210,180 190,187 175,183 160,168 142,158 145,148 165,150 185,157 200,155 225,150 245,150 255,145 245,132 262,138 262,120 278,115 275,100 292,103 305,95',
'A 356,238 370,225 378,235 390,226 398,240 385,246 370,258 362,245',
'A 475,105 490,92 500,97 515,103 525,100 530,107 540,98 550,125 545,135 525,133 515,148 510,140 487,140 483,125',
'A 475,320 492,310 510,320 545,335 540,355 550,372 555,395 540,400 530,390 522,402 510,405 495,392 478,375 458,360 455,348 475,342',
'A 210,375 240,372 265,370 280,355 285,340 293,333 305,345 315,365 325,370 338,360 352,372 360,350 370,345 400,347 425,355 450,375 475,380 475,400 485,412 505,418 520,430 530,445 525,460 515,450 505,460 490,440 482,436 480,455 470,455 468,468 455,465 458,485 445,482 440,500 430,502 420,490 412,495 414,510 410,530 395,540 380,530 375,557 345,550 335,560 348,580 335,587 320,565 310,572 300,560 300,595 295,580 288,570 280,582 272,570 260,580 235,582 210,588 195,605 192,630 188,660 165,660 182,630 180,620 155,608 135,600 132,580 120,575 118,562 105,570 85,555 65,540 68,525 85,530 98,520 90,505 78,480 95,485 100,500 112,485 108,505 120,488 115,475 100,455 90,430 75,425 70,412 90,420 92,405 105,405 120,410 130,425 140,455 150,462 155,430 170,417 183,410 183,388 192,395 195,415 210,420 215,400 210,385',
'A 55,478 68,474 90,478 85,490 98,500 100,518 90,522 85,500 75,485 60,485','A 272,608 276,622 286,627 276,635 272,645 270,633 260,628 268,622','A 495,822 503,825 512,838 510,848 498,843 492,832','A 735,628 748,628 746,642 738,655 732,648','A 436,335 444,336 454,348 448,350',
'B 360,182 366,195 374,218 366,221 349,205','B 164,335 175,335 188,342 198,328 207,342 200,356 192,355 186,342 185,358 175,350','B 8,360 18,365 27,375 18,373','B 497,156 510,160 516,172 508,172','E 600,222 608,216 620,224 618,235 606,236','B 0,525 13,542 13,552 0,550'];
const lines=[
'B 122,400 124,418 137,423 138,435 155,445 175,462 200,460 225,463 242,475 238,490 250,500 250,512 257,528 270,525 290,530 293,542 298,527 310,518 313,490 330,488 350,485 379,485 379,465 373,462 378,452 378,430 395,420 405,411 430,409 440,415 445,422 452,408 482,405 484,430 490,450 515,458 530,473 565,487 572,495 572,515 590,525 610,543 615,532 633,528 637,505 633,490 645,487 655,495 658,478 648,475 655,440 667,410 668,390 652,378 672,382 690,376 705,382 715,372 740,368 750,360 780,362 798,370 797,345 790,310 780,295 778,272 765,268 760,235 750,212 755,200',
'B 380,280 388,290 388,310 392,330 415,327 438,328 445,310 450,298 470,293 483,283 478,258 470,245 456,248',
'B 675,380 690,395 705,413 725,415 731,405 743,400 755,413 770,410 785,415 800,418 818,425 820,440 805,460 800,480 795,495 C 118,500 140,503 152,520 170,540 180,570 182,597 210,595 220,583 235,578 245,600 265,600 275,585 275,568 295,562 310,565 340,550 375,535 378,505 378,455 385,450 398,440 413,440 415,410 405,398 388,392 380,370 360,380 352,360 357,335 370,320 355,312 338,312 352,300 345,280 365,283 380,290 403,288 412,265',
'C 378,505 400,483 415,483 430,513 465,515 482,536',
'C 182,597 172,605 172,630 150,633 135,645 122,648 122,675 112,680 98,672 95,685 85,685 82,700 68,718 40,730 20,735 0,753 B 665,765 650,770 630,772 600,767 583,767',
'E 68,60 72,95 60,105 80,113 110,112 125,125 145,145 160,165 183,183 195,222 188,240',
'E 183,183 190,172 205,175 225,158 250,148 262,160 270,140 260,125 265,105 280,110 300,108 320,115 345,100 340,92 360,78 385,78 412,82 420,60 430,50 425,20 418,12 425,2 445,5 460,3',
'B 257,528 240,540 228,565 240,590 245,600 252,620 263,635 250,640 245,658 252,670 245,682 228,688 220,700 210,711 195,690 175,683 160,682 135,678',
'B 228,688 250,690 255,700 245,720 262,735 300,740 322,746 350,730 355,710 372,697 382,702 380,715 400,710 415,692 435,695 455,697 470,686 486,695 492,740 505,718 533,705 570,706 608,713 600,740 592,765',
'B 610,543 607,570 602,590 585,595 570,580 545,575 537,590 535,605 535,640 527,650 533,670 532,705',
'D 590,105 588,135 575,140 570,155 555,168 530,177 520,185 520,215 513,225 510,280 540,285 565,290 575,305 600,310 598,355 570,360 570,372 560,375 565,390 555,405 538,408 538,420 527,425 527,450 532,460',
'D 707,490 718,470 715,455 740,455 757,430 775,425 790,405 784,400 790,383 803,388 808,405 818,410 840,402 E 165,398 165,430 180,450 190,445 205,432 235,420 240,410 250,412 262,398 275,390 275,380 300,370 312,366 325,370 330,382 340,388 352,388 350,360 375,350 380,360 410,350 420,318 430,312 435,325 450,318 470,318 478,300 490,312 505,298 530,305 558,308 568,290 568,265 555,235 545,222',
'E 340,388 330,405 330,430 327,455 331,490 350,502 370,500 390,508 410,503 430,508 455,495 460,508 470,505 490,512 492,492 500,485 515,492 535,505 545,505 560,512 583,507 585,480 605,470 612,435 620,425 625,405 635,390',
'E 331,490 300,492 277,503 285,515 272,542 285,555 288,590 300,588 310,597 300,620 312,645 298,672 312,690 303,705 308,718','E 645,383 635,392'];
const specks='A 396,68 422,102 435,130 437,132 463,138 472,170 455,180 470,185 472,218 475,235 420,222 432,236 440,240 445,250 450,255 460,262 465,270 475,273 487,268 533,268 540,260 555,115 552,153 540,165 545,180 552,185 556,205 550,215 565,220 575,228 575,240 582,248 559,310 560,322 566,340 548,412 546,425 566,394 415,150 430,158 440,170 425,155 255,140 250,130 48,512 58,520 45,518 75,500 100,490 88,498 288,655 150,657 362,620 368,623 714,602 722,628 757,612 785,590 806,612 418,538 284,322 298,588 378,545 505,455 510,452 520,455 485,450 462,470 450,480 595,380 602,385 608,375 637,425 642,440 640,460 672,512 680,516 744,540 515,150 605,150 620,130 628,135 635,132 360,232 368,230 400,222 545,400 520,400 500,395 570,232 578,236 580,242 B 136,336 511,122 500,160 532,181 571,196 576,198 603,172 604,180 588,214 588,228 602,228 620,231 746,128 749,131 427,184 433,196 437,192 12,635 18,640 25,638 40,655 75,550 85,545 92,552 C 222,42 270,124 278,137 58,130 107,160 125,162 140,164 62,192 265,218 350,215 90,160 E 161,348 591,238 D 130,272 138,275 126,270 144,274 240,345 242,352 205,290 208,303 85,155 75,150 98,200 100,212 562,380 557,385';
define('map-canvas',':host{display:block;overflow:hidden}svg{display:block}',()=>
  `<svg width="1068" height="766" viewBox="0 0 1068 766" stroke="#232323" stroke-width="1.300" stroke-linejoin="round"><g fill="#e67148"><polygon points="${pts(coast,'BD')}"/>${isles.map((p,i)=>`<polygon points="${pts(p,i<5?'A':'')}"/>`).join('')}</g><polygon points="${pts(lake)}" fill="#fdfdfd"/><g fill="none">${lines.map(p=>`<polyline points="${pts(p,'BCDE')}"/>`).join('')}</g><g fill="#232323" stroke="none">${pts(specks).split(' ').map((p,i)=>{const[x,y]=p.split(',');return `<ellipse cx="${x}" cy="${y}" rx="${.9+noise(i)*.6}" ry="${.8+noise(i+9)*.6}"/>`}).join('')}</g></svg>`);

define('menu-item',`:host{display:flex;align-items:center;height:28px;padding-left:32px;box-sizing:border-box}
:host([icon]),:host([check]){padding-left:7px}q-icon{margin-right:5px;width:20px}:host([on]){background:#3399ff;color:#fff}
.cb{width:16px;height:16px;border:1px solid #b0b0b0;background:#fff;margin-right:7px;border-radius:1px}
.sub{border:5px solid transparent;border-left-color:#444;border-right:0;margin:0 6px 0 auto}`,
 el=>(el.hasAttribute('check')?'<span class="cb"></span>':'')+(el.hasAttribute('icon')?`<q-icon name="${el.getAttribute('icon')}"></q-icon>`:'')+'<slot></slot>'+(el.hasAttribute('sub')?'<span class="sub"></span>':''));
const mi=(t,w,a='')=>`<menu-item ${a}><fit-text w="${w}">${t}</fit-text></menu-item>`;
define('context-menu',`:host{position:absolute;left:319px;top:559px;width:261px;height:400px;box-sizing:border-box;background:#fdfdfd;border:1px solid #999;border-right:2px solid #8f8f8f;box-shadow:2px 7px 1px -1px #b5b5b5;font:15px/20px "Noto Sans",sans-serif;color:#111}
hr{border:0;margin:0 5px;height:2px;background:linear-gradient(#cfcfcf 50%,transparent 50%)}
.list{margin-top:-1px}.list>:last-child{margin-top:-1px}svg{position:absolute;left:160px;top:209px}`,
 '<div class="list">'+mi('Show Feature Count',132,'check')+mi('Copy Layer',73)+mi('Re<u>n</u>ame Layer',93)+'<hr>'+mi('Edit Virtual Layer...',123,'icon="mvirt"')+'<hr>'+mi('<u>D</u>uplicate Layer',103,'icon="mdup"')+mi('<u>R</u>emove Layer...',104,'icon="mrem"')+'<hr>'+mi('Move to <u>T</u>op',85)+'<hr>'+mi('<u>O</u>pen Attribute Table',138,'icon="mtable" on')+mi('<u>F</u>ilter...',44)+mi('Change Data Source...',146)+'<hr>'+mi('Export',43,'sub')+'<hr>'+mi('Styles',38,'sub')+mi('Properties...',76)+'</div><svg width="14" height="21" viewBox="0 0 14 21"><path d="M1 1v16l3.800-3.500 3 6.500 2.500-1-3-6.500H12.500z" fill="#fff" stroke="#111"/></svg>');

define('qgis-window',`:host{display:grid;grid-template:26px 29px 47px 47px 1fr/62px 423px 1fr;width:1553px;height:917px;box-sizing:border-box;background:#fdfdfd;overflow:hidden;position:relative;box-shadow:inset 1px 0 #aaa}
title-bar,menu-bar,tool-bar{grid-column:1/-1}
tool-bar{border-bottom:1px solid #b4b4b4}
.docks{display:flex;flex-direction:column;border-top:1px solid #b4b4b4;border-right:1px solid #b4b4b4;min-height:0;box-sizing:border-box}
side-bar,map-canvas{border-top:1px solid #b4b4b4;min-height:0}map-canvas{border-top-width:2px}
.wide{width:56px;gap:4px;justify-content:flex-start;padding-left:7px;box-sizing:border-box}.pale{--arrow:#a8a8a8}.drop{display:flex;align-items:flex-end}.drop drop-arrow{margin:0 -1px 2px -9px;--arrow:#aaa}`,
 '<title-bar></title-bar><menu-bar></menu-bar><tool-bar>'+['newp','open','save','layout','manager','style'].map(btn).join('')+gap(19,9)+['pan','pansel','zin','zout','zfull','zsel','zlay','znat','zlast','znext','newmap','newbm','bms','sync'].map(btn).join('')+
 '</tool-bar><tool-bar><tool-button><div class="drop"><q-icon name="edits"></q-icon><drop-arrow></drop-arrow></div></tool-button>'+['edit','gsave','gadd'].map(btn).join('')+'<tool-button class="wide pale"><q-icon name="gvert"></q-icon><drop-arrow></drop-arrow></tool-button>'+['gmulti','gdel','gcut','gcopy','gpaste','gundo','gredo'].map(btn).join('')+gap(16,9)+['glab','gdia'].map(btn).join('')+'<tool-rule></tool-rule>'+['labpin','labred'].map(btn).join('')+'<tool-rule></tool-rule>'+['glpin','gleye','glmove','glrot','gledit'].map(btn).join('')+gap(20,12)+['globeadd','globefind','metas'].map(btn).join('')+gap(19,10)+btn('python')+gap(17,9)+btn('help')+gap(18,9)+'</tool-bar><side-bar></side-bar><div class="docks"><browser-panel></browser-panel><layers-panel></layers-panel></div><map-canvas></map-canvas><context-menu></context-menu>');
</script>
</body>
</html>
